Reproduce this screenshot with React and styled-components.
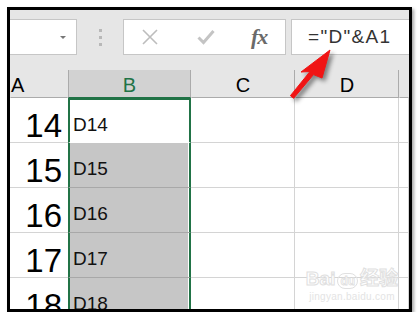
import React from "react";
import styled, { createGlobalStyle } from "styled-components";

const Global = createGlobalStyle`
  body {
    margin: 0;
    background: #fff;
    font-family: "Liberation Sans", Arial, sans-serif;
  }
`;

const Frame = styled.div`
  position: relative;
  margin: 7px 0 0 7px;
  width: 405px;
  height: 305px;
  box-sizing: border-box;
  border: 3px solid #000;
  background: #e6e6e6;
  overflow: hidden;
  box-shadow: 2px 2px 3px rgba(0, 0, 0, 0.35);
`;

const Toolbar = styled.div`
  display: flex;
  align-items: stretch;
  padding-top: 9px;
  height: 36px;
`;

const NameBox = styled.div`
  position: relative;
  width: 68px;
  margin-left: -1px;
  box-sizing: border-box;
  background: #fff;
  border: 1px solid #c6c6c6;
  display: flex;
  align-items: center;
  justify-content: flex-end;
  padding-right: 10px;
`;

const Caret = styled.span`
  width: 0;
  height: 0;
  border-left: 3px solid transparent;
  border-right: 3px solid transparent;
  border-top: 3px solid #777;
`;

const Dots = styled.div`
  width: 46px;
  display: flex;
  flex-direction: column;
  align-items: center;
  justify-content: center;
  gap: 4px;
`;

const Dot = styled.span`
  width: 3px;
  height: 3px;
  background: #b8b8b8;
`;

const ButtonBox = styled.div`
  width: 163px;
  box-sizing: border-box;
  background: #fff;
  border: 1px solid #c6c6c6;
  display: flex;
  align-items: center;
  padding-left: 18px;
`;

const IconSlot = styled.div`
  width: ${(p) => p.$w}px;
  display: flex;
  align-items: center;
`;

const Fx = styled.span`
  font-family: "Liberation Serif", "Times New Roman", serif;
  font-style: italic;
  font-weight: bold;
  font-size: 22px;
  color: #6a6a6a;
  letter-spacing: -1px;
`;

const FormulaBar = styled.div`
  flex: 1;
  margin-left: 5px;
  margin-right: -2px;
  box-sizing: border-box;
  background: #fff;
  border: 1px solid #c6c6c6;
  padding-left: 16px;
  display: flex;
  align-items: center;
  font-size: 19px;
  letter-spacing: 1.3px;
  color: #333;
`;

const Sheet = styled.div`
  margin-top: 15px;
  display: grid;
  grid-template-columns: 58px 123px 104px 104px 1fr;
  grid-template-rows: 28px repeat(5, 45px);
`;

const ColHead = styled.div`
  box-sizing: border-box;
  height: 28px;
  border-bottom: 1px solid ${(p) => (p.$active ? "#217346" : "#ababab")};
  border-right: 1px solid ${(p) => (p.$edge ? "#ababab" : "transparent")};
  border-left: 1px solid ${(p) => (p.$active ? "#ababab" : "transparent")};
  background: ${(p) => (p.$active ? "#d2d2d2" : "#e6e6e6")};
  color: ${(p) => (p.$active ? "#217346" : "#000")};
  font-size: 20px;
  line-height: 27px;
  padding-top: 2px;
  text-align: ${(p) => (p.$left ? "left" : "center")};
`;

const RowHead = styled.div`
  box-sizing: border-box;
  background: #fff;
  border-bottom: 1px solid #d4d4d4;
  text-align: right;
  padding-right: 6px;
  padding-top: 6px;
  font-size: 33px;
  line-height: 44px;
  overflow: hidden;
`;

const SelCell = styled.div`
  box-sizing: border-box;
  border-left: 2px solid #217346;
  border-right: 2px solid #217346;
  border-top: ${(p) => (p.$first ? "2px solid #217346" : "none")};
  border-bottom: 1px solid ${(p) => (p.$first ? "#fff" : "#a8a8a8")};
  background: ${(p) => (p.$first ? "#fff" : "#c6c6c6")};
  box-shadow: ${(p) => (p.$first ? "none" : "inset -1px 0 0 #fff")};
  padding-left: 3px;
  padding-top: ${(p) => (p.$first ? 3 : 4)}px;
  font-size: 19px;
  line-height: 44px;
  color: #111;
  overflow: hidden;
`;

const Cell = styled.div`
  box-sizing: border-box;
  background: #fff;
  border-right: 1px solid #d4d4d4;
  border-bottom: 1px solid #d4d4d4;
`;

const Overlay = styled.svg`
  position: absolute;
  left: 0;
  top: 0;
  pointer-events: none;
  overflow: visible;
`;

const Watermark = styled.div`
  position: absolute;
  left: 290px;
  top: 259px;
  width: 104px;
  pointer-events: none;
  color: #fff;
  text-align: center;
  white-space: nowrap;
`;

const MarkTop = styled.div`
  display: flex;
  align-items: flex-end;
  justify-content: center;
  gap: 2px;
  font-size: 19px;
  font-weight: bold;
  line-height: 20px;
  -webkit-text-stroke: 1px #e0e0e0;
  font-family: "Liberation Sans", "Noto Sans CJK SC", sans-serif;
`;

const Paw = styled.span`
  display: inline-block;
  border: 1px solid #e0e0e0;
  border-radius: 8px;
  padding: 0 2px;
  font-size: 12px;
  line-height: 14px;
  -webkit-text-stroke: 0.8px #e0e0e0;
`;

const MarkSub = styled.div`
  margin-top: 3px;
  font-size: 10px;
  line-height: 10px;
  color: #e4e4e4;
  letter-spacing: 0.3px;
`;

const rows = [14, 15, 16, 17, 18];

export default function App() {
  return (
    <>
      <Global />
      <Frame>
        <Toolbar>
          <NameBox>
            <Caret />
          </NameBox>
          <Dots>
            <Dot />
            <Dot />
            <Dot />
          </Dots>
          <ButtonBox>
            <IconSlot $w={55}>
              <svg width="16" height="16" viewBox="0 0 16 16">
                <path d="M1 1 L15 15 M15 1 L1 15" stroke="#bdbdbd" strokeWidth="1.6" fill="none" />
              </svg>
            </IconSlot>
            <IconSlot $w={54}>
              <svg width="18" height="16" viewBox="0 0 18 16">
                <path d="M1.5 8.5 L6.5 13.5 L16.5 2" stroke="#c4c4c4" strokeWidth="3" fill="none" />
              </svg>
            </IconSlot>
            <Fx>fx</Fx>
          </ButtonBox>
          <FormulaBar>="D"&amp;A1</FormulaBar>
        </Toolbar>
        <Sheet>
          <ColHead $left>A</ColHead>
          <ColHead $active $edge>B</ColHead>
          <ColHead $edge>C</ColHead>
          <ColHead $edge>D</ColHead>
          <ColHead />
          {rows.map((r, i) => (
            <React.Fragment key={r}>
              <RowHead>{r}</RowHead>
              <SelCell $first={i === 0}>D{r}</SelCell>
              <Cell />
              <Cell />
              <Cell />
            </React.Fragment>
          ))}
        </Sheet>
        <Watermark>
          <MarkTop>
            <span>Bai</span>
            <Paw>du</Paw>
            <span>经验</span>
          </MarkTop>
          <MarkSub>jingyan.baidu.com</MarkSub>
        </Watermark>
        <Overlay width="399" height="299">
          <polygon
            points="320,40 312,68 303.5,64.6 283.6,88.3 280.4,85.7 300,61.5 291,62"
            fill="#f01414"
            stroke="#f01414"
            strokeWidth="1"
            strokeLinejoin="round"
            style={{ filter: "drop-shadow(3px 3px 2px rgba(0,0,0,0.45))" }}
          />
        </Overlay>
      </Frame>
    </>
  );
}
